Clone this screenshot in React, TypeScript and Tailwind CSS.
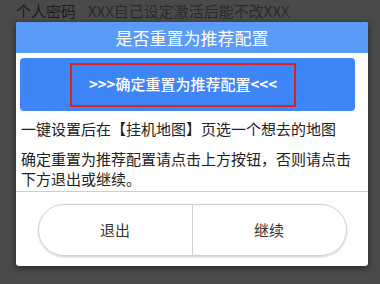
import React from 'react';

const font = { fontFamily: '"Noto Sans CJK SC", "Noto Sans", sans-serif' };

export default function App() {
  return (
    <div className="relative w-[380px] h-[284px] overflow-hidden bg-[#4a4a4a]" style={font}>
      {/* page behind the modal (dimmed) */}
      <div className="flex flex-col px-4 text-[15px] text-[#1c1c1c]">
        <div className="flex h-[24px] items-center gap-3 -mt-[1px]">
          <span>个人密码</span>
          <span className="text-[#2a2a2a]">XXX自己设定激活后能不改XXX</span>
        </div>
        <div className="mt-[222px] flex items-center gap-3 font-bold text-[#262626] leading-[20px]">
          <span className="w-[12px] h-[12px] bg-[#1a1a1a]" />
          <span>一键设置为推荐配置推荐配置</span>
        </div>
      </div>

      {/* modal */}
      <div className="absolute left-[16px] top-[22px] w-[352px] h-[244px] rounded-[3px] bg-white shadow-[0_2px_6px_rgba(0,0,0,0.5)] flex flex-col overflow-hidden">
        <div className="h-[31px] bg-[#5a9af8] flex items-center justify-center text-white text-[17px]">
          是否重置为推荐配置
        </div>
        <div className="px-[4px] pt-[5px]">
          <button className="w-[335px] h-[53px] rounded-[4px] bg-[#3e85f7] flex items-center justify-start">
            <span className="ml-[50px] w-[226px] h-[44px] border-2 border-[#e0201c] flex items-center justify-center text-white text-[15px] font-medium">
              <b className="font-bold">&gt;&gt;&gt;</b>确定重置为推荐配置<b className="font-bold">&lt;&lt;&lt;</b>
            </span>
          </button>
        </div>
        <div className="px-[5px] pt-[8px] text-[15px] text-[#222] leading-[20px]">
          <p>一键设置后在【挂机地图】页选一个想去的地图</p>
          <p className="mt-[10px]">确定重置为推荐配置请点击上方按钮，否则请点击下方退出或继续。</p>
        </div>
        <div className="mt-[2px] border-t border-[#cfcfcf]" />
        <div className="flex justify-center pt-[12px]">
          <div className="w-[309px] h-[52px] rounded-full border border-[#d0d0d0] shadow-[0_1px_2px_rgba(0,0,0,0.2)] flex overflow-hidden text-[15px] text-[#333]">
            <button className="flex-1 flex items-center justify-center border-r border-[#d0d0d0]">退出</button>
            <button className="flex-1 flex items-center justify-center">继续</button>
          </div>
        </div>
      </div>
    </div>
  );
}
